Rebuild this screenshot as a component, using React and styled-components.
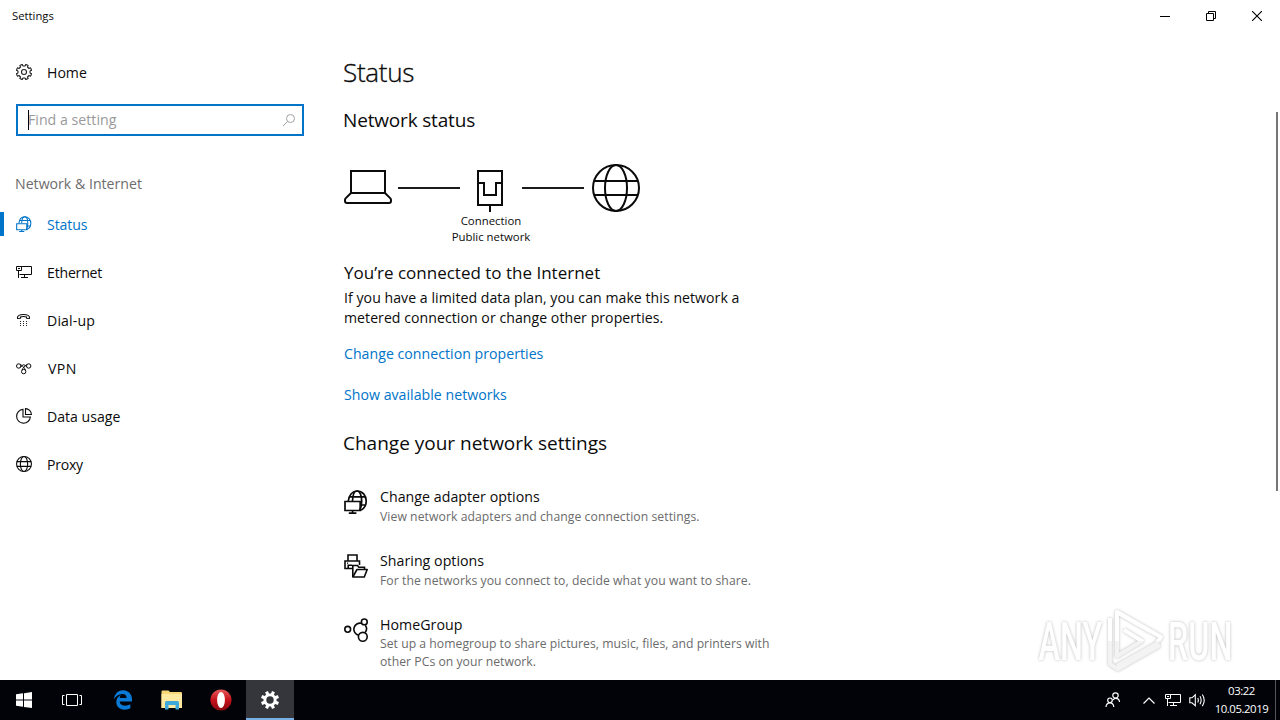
import React from "react";
import styled, { createGlobalStyle, css } from "styled-components";
import { FaEdgeLegacy } from "react-icons/fa6";

const accent = "#0074c8";

const GlobalStyle = createGlobalStyle`
  * { box-sizing: border-box; }
  body {
    margin: 0;
    background: #fff;
    color: #0b0b0b;
    font-family: "Open Sans", "Noto Sans", sans-serif;
    overflow: hidden;
  }
  svg { display: block; flex: none; }
  h1, h2, h3, p { margin: 0; font-weight: 400; }
`;

const Desktop = styled.div`
  position: relative;
  width: 1280px;
  height: 720px;
  display: flex;
  flex-direction: column;
  overflow: hidden;
`;

const TitleBar = styled.header`
  display: flex;
  justify-content: space-between;
  height: 32px;
  flex: none;
`;

const WindowTitle = styled.span`
  padding-left: 12px;
  font-size: 11.3px;
  line-height: 32px;
`;

const WindowButtons = styled.div`
  display: flex;
`;

const WindowButton = styled.div`
  width: 46px;
  height: 32px;
  display: flex;
  align-items: center;
  justify-content: center;
`;

const Window = styled.div`
  flex: 1;
  min-height: 0;
  display: flex;
`;

const Sidebar = styled.nav`
  width: 343px;
  flex: none;
  padding-top: 16px;
`;

const NavItem = styled.div`
  display: flex;
  align-items: center;
  height: 48px;
  padding-left: 12px;
  border-left: 4px solid transparent;
  gap: ${(p) => p.$gap ?? 15}px;
  font-size: 14.1px;
  line-height: 24px;
  ${(p) =>
    p.$active &&
    css`
      color: ${accent};
      border-image: linear-gradient(transparent 12px, ${accent} 12px, ${accent} 36px, transparent 36px) 0 0 0 4;
    `}
`;

const NavLabel = styled.span`
  padding-top: 1px;
  letter-spacing: ${(p) => p.$spacing ?? 0}px;
`;

const SearchBox = styled.div`
  display: flex;
  align-items: center;
  width: 288px;
  height: 32px;
  margin: 8px 0 0 16px;
  padding: 0 6px 0 10px;
  border: 2px solid ${accent};
`;

const Caret = styled.span`
  width: 1px;
  height: 20px;
  margin-right: -1px;
  background: #000;
`;

const Placeholder = styled.span`
  flex: 1;
  font-size: 14.2px;
  line-height: 20px;
  color: #9a9a9a;
`;

const NavHeading = styled.h3`
  height: 64px;
  padding: 31px 0 0 15px;
  font-size: 14.15px;
  line-height: 33px;
  color: #6d6d6d;
`;

const Content = styled.main`
  flex: 1;
  padding: 20px 0 0 1px;
`;

const PageTitle = styled.h1`
  margin-left: -1px;
  font-size: 26px;
  font-weight: 300;
  line-height: 40px;
  letter-spacing: -0.3px;
  -webkit-text-stroke: 0.35px currentColor;
`;

const SectionTitle = styled.h2`
  margin: ${(p) => p.$top}px 0 0 -1px;
  font-size: 19px;
  line-height: 28px;
  letter-spacing: ${(p) => p.$spacing ?? 0}px;
`;

const Diagram = styled.div`
  display: flex;
  align-items: center;
  height: 48px;
  margin-top: 30px;
`;

const Link = styled.div`
  width: 62px;
  height: 2px;
  margin: 0 ${(p) => p.$gap}px;
  background: #1b1b1b;
`;

const ConnectionLabel = styled.div`
  width: 294px;
  padding-top: 1px;
  text-align: center;
  font-size: 11.4px;
  line-height: 16px;
`;

const StatusTitle = styled.h3`
  margin-top: 16px;
  font-size: 17px;
  line-height: 24px;
`;

const StatusText = styled.p`
  width: 420px;
  margin-top: 3px;
  font-size: 14.1px;
  line-height: 20px;
  letter-spacing: 0.05px;
`;

const TextLink = styled.div`
  margin-top: ${(p) => p.$top}px;
  font-size: 14.15px;
  line-height: 20px;
  letter-spacing: 0.02px;
  color: ${accent};
`;

const SettingsList = styled.div`
  margin-top: 30px;
`;

const Setting = styled.div`
  display: flex;
  height: 64px;
  gap: 12px;
  svg { margin-top: 3px; }
`;

const SettingTitle = styled.div`
  font-size: 14.2px;
  line-height: 20px;
  letter-spacing: 0.03px;
`;

const SettingText = styled.p`
  margin-top: ${(p) => (p.$tight ? 0 : 1)}px;
  width: 400px;
  font-size: 12.2px;
  line-height: 18px;
  letter-spacing: ${(p) => (p.$tight ? 0.03 : 0.065)}px;
  color: #6b6b6b;
`;

const ScrollThumb = styled.div`
  width: 2px;
  height: 379px;
  margin: 80px 2px 0 0;
  background: #767676;
`;

const Taskbar = styled.footer`
  display: flex;
  justify-content: space-between;
  height: 40px;
  flex: none;
  background: #010308;
  color: #fff;
`;

const TaskGroup = styled.div`
  display: flex;
  gap: ${(p) => p.$gap || 0}px;
  margin-left: ${(p) => p.$left || 0}px;
`;

const TaskButton = styled.div`
  width: 48px;
  height: 40px;
  display: flex;
  align-items: center;
  justify-content: center;
  ${(p) =>
    p.$active &&
    css`
      background: #34363c;
      box-shadow: inset 0 -2px #76b0e4;
    `}
`;

const Tray = styled.div`
  display: flex;
  align-items: center;
`;

const TrayIcon = styled.div`
  margin-right: ${(p) => p.$after}px;
`;

const Clock = styled.div`
  width: 55px;
  height: 40px;
  padding-top: 2px;
  text-align: center;
  white-space: nowrap;
  font-size: 11.4px;
  line-height: 18px;
  letter-spacing: -0.45px;
`;

const ShowDesktop = styled.div`
  width: 5px;
  height: 40px;
  margin-left: 6px;
  border-left: 1px solid #53555a;
`;

const Watermark = styled.div`
  position: absolute;
  left: 1030px;
  top: 602px;
`;

function gearPath(c, outer, inner, teeth, wTop, wBase) {
  const pts = [];
  for (let i = 0; i < teeth; i++) {
    const a = (i * 2 * Math.PI) / teeth - Math.PI / 2 + Math.PI / teeth;
    [
      [inner, -wBase],
      [outer, -wTop],
      [outer, wTop],
      [inner, wBase],
    ].forEach(([r, d]) => {
      pts.push(`${(c + r * Math.cos(a + d)).toFixed(2)} ${(c + r * Math.sin(a + d)).toFixed(2)}`);
    });
  }
  return `M${pts.join("L")}Z`;
}

const Icon = ({ size = 16, box = size, sw = 1, children, ...rest }) => (
  <svg width={size} height={size} viewBox={`0 0 ${box} ${box}`} fill="none" stroke="currentColor" strokeWidth={sw} {...rest}>
    {children}
  </svg>
);

const HomeGear = () => (
  <Icon sw={1.1} stroke="#222">
    <path d={gearPath(8, 7.8, 6.1, 8, 0.17, 0.22)} strokeLinejoin="round" />
    <circle cx="8" cy="8" r="2.5" />
  </Icon>
);

const StatusGlobe = ({ size = 16, sw = 1.6 }) => (
  <Icon size={size} box={24} sw={sw}>
    <path d="M4.300 11C5 5 8.500 1 13 1C18.500 1 22.200 5.500 22.200 11C22.200 15.500 20 18.800 16.500 20.300" />
    <path d="M8.500 11C8.700 5 10.500 1 13 1C15.800 1 17.700 5.500 17.700 11C17.700 15 17 18 15.500 20.500" />
    <path d="M5.500 6.800H21.200M17 15H21.300" />
    <path d="M1 11.500H16.200V20.500H1ZM8.600 20.500V23.200M4.800 23.200H12.400" />
  </Icon>
);

const EthernetIcon = ({ color = "currentColor", bg = "#fff" }) => (
  <Icon stroke={color}>
    <path d="M5 2.500H15.500V10.500H3.500M8.500 10.500V13.500M5 13.500H12" />
    <path d="M.5 2.500H5.500V6.500H.5ZM2.500 6.500V14" fill={bg} />
    <path d="M2 4.500H4" />
  </Icon>
);

const DialUpIcon = () => (
  <Icon sw={1.1}>
    <path d="M1.500 6.500C.8 3.500 4 2.500 7.500 2.500S14.200 3.500 13.500 6.500L10.600 6.300V5C8.500 4.400 6.500 4.400 4.400 5V6.300Z" />
    <path d="M4 9.500h1M7 9.500h1M10 9.500h1M4 11.500h1M7 11.500h1M10 11.500h1M4 13.500h1M7 13.500h1M10 13.500h1" strokeWidth=".9" />
  </Icon>
);

const VpnIcon = () => (
  <Icon sw={1}>
    <circle cx="2.700" cy="6" r="2.200" />
    <circle cx="12.700" cy="6" r="2.200" />
    <circle cx="7.700" cy="11.600" r="2.200" />
    <path d="M4.300 4.500C6.500 5.600 8.500 7.500 9.400 10.200M11.100 4.500C8.900 5.600 6.900 7.500 6 10.200M4.500 7.300L6.600 5.100Q7.700 4.300 8.800 5.100L10.900 7.300" />
  </Icon>
);

const DataIcon = () => (
  <Icon sw={1.1}>
    <path d="M7 1.400A6.900 6.900 0 1 0 14.400 9H7Z" />
    <path d="M9.500.6V6.500H15.400A6 6 0 0 0 9.500.6Z" />
  </Icon>
);

const Globe = ({ size = 16, sw = 1.1 }) => {
  const r = 24 - (sw * 24) / size;
  return (
    <Icon size={size} box={48} sw={(sw * 48) / size}>
      <circle cx="24" cy="24" r={r} />
      <ellipse cx="24" cy="24" rx="11" ry={r} />
      <path d="M2.500 17H45.500M2.500 31H45.500" />
    </Icon>
  );
};

const Laptop = () => (
  <Icon size={48} sw={2}>
    <path d="M7 7H41V29H7Z" />
    <path d="M7 29L1.600 34.400Q1 35 1 36V37Q1 39 3 39H45Q47 39 47 37V36Q47 35 46.400 34.400L41 29" />
  </Icon>
);

const Port = () => (
  <Icon size={48} sw={2}>
    <path d="M12 7H36V41H12ZM12 19H18V31H30V19H36M24 41V48" />
  </Icon>
);

const SharingIcon = () => (
  <Icon size={24} sw={1.6}>
    <path d="M4 7V1H13V7M8 14.500H1V7H15.500V11" />
    <path d="M4.200 14V11.300H8" />
    <path d="M3 9.200h1.200" strokeWidth="1.200" />
    <path d="M8.800 23V11.500H13.500L14.800 13.200H20.500V15.500" />
    <path d="M8.800 23L13 15.500H23.200L20.300 23Z" strokeLinejoin="round" />
  </Icon>
);

const HomeGroupIcon = () => (
  <Icon size={24} sw={1.6}>
    <circle cx="3.700" cy="11.300" r="2.900" />
    <circle cx="20.300" cy="3.900" r="2.900" />
    <circle cx="18.800" cy="18.800" r="4.400" />
    <path d="M17.500 5.300A6 6 0 1 0 14.500 17.200M21.200 7.200A6 6 0 0 1 21.200 14.500" />
  </Icon>
);

const navItems = [
  { label: "Status", icon: <StatusGlobe />, active: true, spacing: -0.1 },
  { label: "Ethernet", icon: <EthernetIcon />, spacing: -0.2 },
  { label: "Dial-up", icon: <DialUpIcon />, spacing: 0.15 },
  { label: "VPN", icon: <VpnIcon />, gap: 16, spacing: 0.4 },
  { label: "Data usage", icon: <DataIcon /> },
  { label: "Proxy", icon: <Globe />, spacing: -0.25 },
];

const settings = [
  {
    title: "Change adapter options",
    lines: ["View network adapters and change connection settings."],
    icon: <StatusGlobe size={24} sw={1.7} />,
  },
  {
    title: "Sharing options",
    lines: ["For the networks you connect to, decide what you want to share."],
    icon: <SharingIcon />,
  },
  {
    title: "HomeGroup",
    lines: ["Set up a homegroup to share pictures, music, files, and printers with", "other PCs on your network."],
    icon: <HomeGroupIcon />,
    tight: true,
  },
];

const Lines = ({ lines }) =>
  lines.map((line, i) => (
    <React.Fragment key={line}>
      {i > 0 && <br />}
      {line}
    </React.Fragment>
  ));

const MarkDrawing = styled.svg`
  filter: drop-shadow(0 0 1.5px rgba(0, 0, 0, 0.27));
`;

const AnyRunMark = () => (
  <MarkDrawing width="212" height="76" viewBox="0 0 212 76">
    <defs>
      <linearGradient id="sheen" x1="0" y1="20" x2="0" y2="58" gradientUnits="userSpaceOnUse">
        <stop offset=".5" stopColor="#fff" />
        <stop offset=".5" stopColor="#f3f3f3" />
      </linearGradient>
    </defs>
    <g fill="url(#sheen)" fontFamily="Roboto, sans-serif" fontSize="53" fontWeight="500">
      <text transform="translate(8.5 58) scale(.61 1)">ANY</text>
      <text transform="translate(138 58) scale(.61 1)">RUN</text>
    </g>
    <g fill="none" stroke="url(#sheen)" strokeWidth="4" strokeLinejoin="round">
      <path d="M87 10L131 35L126 42L87 64" />
      <path d="M87 52V10L120 29" />
      <path d="M80 16V62L88 67L130 43" />
      <path d="M87 22V54L112 39L94 28" />
    </g>
  </MarkDrawing>
);

export default function App() {
  return (
    <Desktop>
      <GlobalStyle />
      <TitleBar>
        <WindowTitle>Settings</WindowTitle>
        <WindowButtons>
          <WindowButton>
            <Icon size={10} stroke="#000">
              <path d="M0 5.500H10" />
            </Icon>
          </WindowButton>
          <WindowButton>
            <Icon size={10} stroke="#000">
              <path d="M.5 2.500H7.500V9.500H.5ZM2.500 2.500V.5H9.500V7.500H7.500" />
            </Icon>
          </WindowButton>
          <WindowButton>
            <Icon size={10} stroke="#000" sw={1.1}>
              <path d="M0 0L10 10M10 0L0 10" />
            </Icon>
          </WindowButton>
        </WindowButtons>
      </TitleBar>
      <Window>
        <Sidebar>
          <NavItem>
            <HomeGear />
            <NavLabel>Home</NavLabel>
          </NavItem>
          <SearchBox>
            <Caret />
            <Placeholder>Find a setting</Placeholder>
            <Icon size={14} stroke="#a0a0a0">
              <circle cx="8.500" cy="5.500" r="4" />
              <path d="M5.600 8.400L1 13" />
            </Icon>
          </SearchBox>
          <NavHeading>Network &amp; Internet</NavHeading>
          {navItems.map((item) => (
            <NavItem key={item.label} $active={item.active} $gap={item.gap}>
              {item.icon}
              <NavLabel $spacing={item.spacing}>{item.label}</NavLabel>
            </NavItem>
          ))}
        </Sidebar>
        <Content>
          <PageTitle>Status</PageTitle>
          <SectionTitle $top={14} $spacing={-0.17}>Network status</SectionTitle>
          <Diagram>
            <Laptop />
            <Link $gap={6} />
            <Port />
            <Link $gap={8} />
            <Globe size={48} sw={2} />
          </Diagram>
          <ConnectionLabel>
            <Lines lines={["Connection", "Public network"]} />
          </ConnectionLabel>
          <StatusTitle>You’re connected to the Internet</StatusTitle>
          <StatusText>
            <Lines
              lines={[
                "If you have a limited data plan, you can make this network a",
                "metered connection or change other properties.",
              ]}
            />
          </StatusText>
          <TextLink $top={16}>Change connection properties</TextLink>
          <TextLink $top={21}>Show available networks</TextLink>
          <SectionTitle $top={24}>Change your network settings</SectionTitle>
          <SettingsList>
            {settings.map((s) => (
              <Setting key={s.title}>
                {s.icon}
                <div>
                  <SettingTitle>{s.title}</SettingTitle>
                  <SettingText $tight={s.tight}>
                    <Lines lines={s.lines} />
                  </SettingText>
                </div>
              </Setting>
            ))}
          </SettingsList>
        </Content>
        <ScrollThumb />
      </Window>
      <Taskbar>
        <TaskGroup>
          <TaskButton>
            <Icon fill="#fff" stroke="none">
              <path d="M0 2.300L7 1.300V7.600H0ZM8 1.200L16 0V7.600H8ZM0 8.600H7V14.800L0 13.800ZM8 8.600H16V16L8 14.900Z" />
            </Icon>
          </TaskButton>
          <TaskButton>
            <Icon size={20}>
              <path d="M4.500 4.500H15.500V15.500H4.500ZM2.500 5.500H.5V14.500H2.500M17.500 5.500H19.500V14.500H17.500" />
            </Icon>
          </TaskButton>
          <TaskGroup $gap={1} $left={3}>
            <TaskButton>
              <FaEdgeLegacy size={20} color="#0a7ad6" />
            </TaskButton>
            <TaskButton>
              <Icon size={22} stroke="none">
                <path d="M.5 2.500Q.5 1.500 1.500 1.500H7.500L9 3H20Q21 3 21 4V19H.5Z" fill="#f5d778" />
                <path d="M.5 5H21V19H.5Z" fill="#fde9a0" />
                <path d="M4 20.500V13.500Q4 12 5.500 12H16.500Q18 12 18 13.500V20.500H14.500V16H7.500V20.500Z" fill="#3fa9dc" />
              </Icon>
            </TaskButton>
            <TaskButton>
              <Icon size={22} stroke="none">
                <defs>
                  <linearGradient id="opera" x1="0" y1="0" x2="0" y2="1">
                    <stop offset="0" stopColor="#e8595a" />
                    <stop offset=".5" stopColor="#c4121c" />
                    <stop offset="1" stopColor="#8c0710" />
                  </linearGradient>
                </defs>
                <ellipse cx="11" cy="11" rx="10.600" ry="10.600" fill="url(#opera)" />
                <ellipse cx="11" cy="11" rx="3.900" ry="8" fill="#fff" />
              </Icon>
            </TaskButton>
            <TaskButton $active>
              <Icon size={18} stroke="none" fill="#fff">
                <path
                  fillRule="evenodd"
                  d={`${gearPath(9, 9.2, 6.6, 8, 0.17, 0.24)}M9 5.300A3.700 3.700 0 1 0 9 12.700A3.700 3.700 0 1 0 9 5.300Z`}
                />
              </Icon>
            </TaskButton>
          </TaskGroup>
        </TaskGroup>
        <Tray>
          <TrayIcon $after={22}>
            <Icon sw={1.2}>
              <circle cx="10.500" cy="3.500" r="2.700" />
              <circle cx="5" cy="8.300" r="2.300" />
              <path d="M1 15C1.200 12.300 2.700 10.800 5 10.800S8.600 12.300 8.800 15M8 8C8.800 6.800 9.500 6.300 10.800 6.300C13 6.300 14.300 7.800 14.600 10" />
            </Icon>
          </TrayIcon>
          <TrayIcon $after={9}>
            <Icon size={13} sw={1.2}>
              <path d="M.5 9.500L6 4L11.500 9.500" />
            </Icon>
          </TrayIcon>
          <TrayIcon $after={8}>
            <EthernetIcon bg="#010308" />
          </TrayIcon>
          <TrayIcon $after={8}>
            <Icon size={17} sw={1.1}>
              <path d="M.8 5.800H3L6.300 2.800V13.800L3 10.800H.8Z" />
              <path d="M8.700 6Q10 8.300 8.700 10.600M11 4.300Q13.300 8.300 11 12.300M13.300 2.500Q17.200 8.300 13.300 14.100" />
            </Icon>
          </TrayIcon>
          <Clock>
            03:22
            <br />
            10.05.2019
          </Clock>
          <ShowDesktop />
        </Tray>
      </Taskbar>
      <Watermark>
        <AnyRunMark />
      </Watermark>
    </Desktop>
  );
}
